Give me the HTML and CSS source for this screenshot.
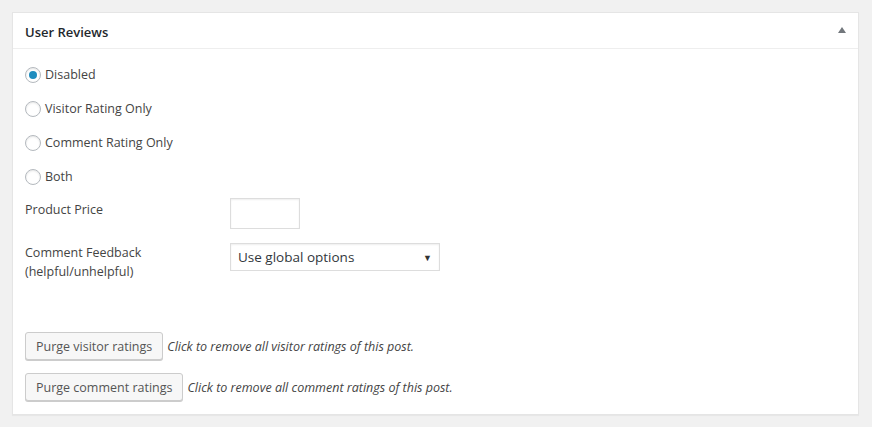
FILE: index.html
```html
<!DOCTYPE html>
<html lang="en">
<head>
    <meta charset="UTF-8">
    <title>User Reviews</title>
    <link rel="stylesheet" href="styles.css">
</head>
<body>
    <!-- Metabox -->
    <div class="postbox">
        <div class="postbox-header">
            <h2>User Reviews</h2>
            <span class="toggle-arrow"></span>
        </div>
        <div class="inside">
            <div class="radio-list">
                <label class="radio-row"><input type="radio" name="mode" checked> Disabled</label>
                <label class="radio-row"><input type="radio" name="mode"> Visitor Rating Only</label>
                <label class="radio-row"><input type="radio" name="mode"> Comment Rating Only</label>
                <label class="radio-row"><input type="radio" name="mode"> Both</label>
            </div>

            <div class="field-row price-row">
                <div class="field-label">Product Price</div>
                <input type="text" class="price-input">
            </div>

            <div class="field-row feedback-row">
                <div class="field-label">Comment Feedback<br>(helpful/unhelpful)</div>
                <div class="select-box">Use global options<span class="select-arrow">&#9660;</span></div>
            </div>

            <div class="purge-row first">
                <button class="button">Purge visitor ratings</button>
                <em>Click to remove all visitor ratings of this post.</em>
            </div>
            <div class="purge-row">
                <button class="button">Purge comment ratings</button>
                <em>Click to remove all comment ratings of this post.</em>
            </div>
        </div>
    </div>
</body>
</html>
```
FILE: styles.css
```css
/* General Reset */
body {
    margin: 0;
    padding: 12px;
    background: #f1f1f1;
    font-family: "Open Sans", "Noto Sans", sans-serif;
    font-size: 12.5px;
    color: #444444;
}

/* Metabox */
.postbox {
    width: 845px;
    height: 401px;
    background: #ffffff;
    border: 1px solid #e5e5e5;
    box-shadow: 0 1px 1px rgba(0, 0, 0, 0.04);
}

.postbox-header {
    height: 35px;
    border-bottom: 1px solid #eeeeee;
    display: flex;
    align-items: center;
    justify-content: space-between;
    padding: 0 12px;
}

.postbox-header h2 {
    margin: 2px 0 0 0;
    font-size: 13px;
    font-weight: 600;
    color: #23282d;
}

.toggle-arrow {
    width: 0;
    height: 0;
    border-left: 4px solid transparent;
    border-right: 4px solid transparent;
    border-bottom: 6px solid #72777c;
    margin-top: -2px;
}

.inside {
    padding: 17px 12px 0 12px;
}

/* Radios */
.radio-list {
    display: flex;
    flex-direction: column;
    gap: 16px;
}

.radio-row {
    display: flex;
    align-items: center;
    gap: 4px;
    height: 18px;
    line-height: 18px;
}

.radio-row input {
    appearance: none;
    width: 16px;
    height: 16px;
    margin: 0;
    border: 1px solid #b4b9be;
    border-radius: 50%;
    box-shadow: inset 0 1px 2px rgba(0, 0, 0, 0.1);
    display: flex;
    align-items: center;
    justify-content: center;
    background: #ffffff;
}

.radio-row input:checked::before {
    content: "";
    width: 8px;
    height: 8px;
    border-radius: 50%;
    background: #1e8cbe;
}

/* Fields */
.field-row {
    display: flex;
    align-items: flex-start;
}

.field-label {
    width: 205px;
    line-height: 19px;
}

.price-row {
    margin-top: 14px;
}

.price-input {
    width: 70px;
    height: 31px;
    box-sizing: border-box;
    margin: -2px 0 0 0;
    border: 1px solid #dddddd;
    box-shadow: inset 0 1px 2px rgba(0, 0, 0, 0.07);
}

.feedback-row {
    margin-top: 14px;
}

.select-box {
    width: 210px;
    height: 28px;
    box-sizing: border-box;
    border: 1px solid #dddddd;
    box-shadow: inset 0 1px 2px rgba(0, 0, 0, 0.07);
    padding: 0 7px;
    display: flex;
    align-items: center;
    justify-content: space-between;
    color: #32373c;
    font-size: 13.5px;
}

.select-arrow {
    font-size: 9px;
    color: #333333;
}

/* Purge buttons */
.purge-row {
    display: flex;
    align-items: center;
    gap: 4px;
    margin-top: 13px;
}

.purge-row.first {
    margin-top: 51px;
}

.button {
    height: 28px;
    padding: 0 10px;
    font-family: inherit;
    font-size: 12.5px;
    color: #555555;
    background: #f7f7f7;
    border: 1px solid #cccccc;
    border-radius: 3px;
    box-shadow: 0 1px 0 #cccccc;
}

.purge-row em {
    color: #444444;
}
```
